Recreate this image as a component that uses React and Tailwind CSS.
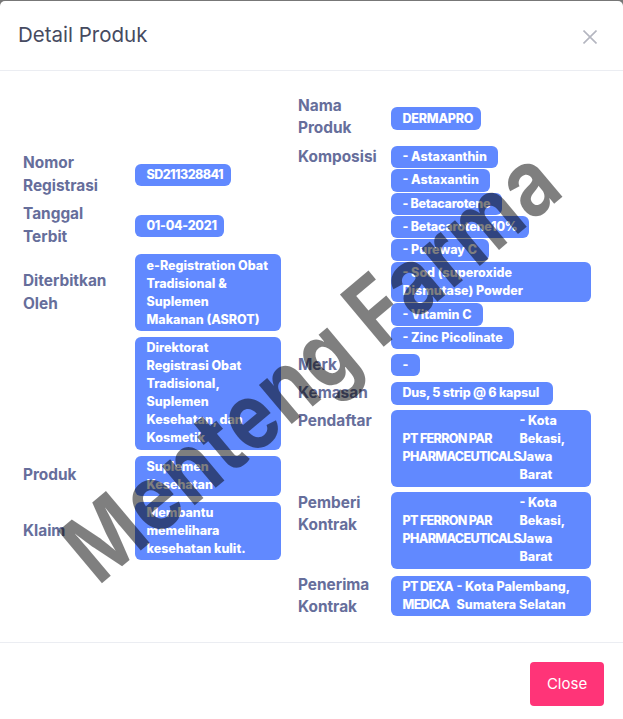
const font = { fontFamily: '"Inter", "Liberation Sans", sans-serif' };

const Badge = ({ children, className = "", track = "tracking-[0px]" }) => (
  <div className={`rounded-[6px] bg-[#6189ff] px-[11.5px] text-[12.5px] font-extrabold leading-[18px] whitespace-nowrap text-white ${track} ${className}`}>
    {children}
  </div>
);

const Small = ({ children, w = "", track }) => <Badge track={track} className={`py-[2.15px] ${w}`}>{children}</Badge>;

const Label = ({ children, className = "" }) => (
  <div className={`text-[15.4px] font-bold text-[#666e9b] ${className}`}>{children}</div>
);

const Company = ({ name, place, nameW }) => (
  <div className="flex items-center">
    <div className={`${nameW} tracking-[-0.65px]`}>{name}</div>
    <div className="min-w-0 flex-1">{place}</div>
  </div>
);

export default function App() {
  return (
    <div style={font} className="h-[719px] w-[623px] overflow-hidden bg-[#777777] pt-[1px]">
      <div className="relative flex h-[718px] flex-col overflow-hidden rounded-t-[5px] bg-white">
        <div className="flex h-[70px] shrink-0 items-center justify-between border-b border-[#ebedf2] pb-[1px] pl-[18px] pr-[26px]">
          <h5 className="text-[20.5px] font-normal text-[#464a60]">Detail Produk</h5>
          <svg width="14" height="14" viewBox="0 0 14 14" className="mt-[3px] text-[#b4b6c0]" stroke="currentColor" strokeWidth="1.6" fill="none">
            <path d="M0.5 0.5L13.5 13.5M13.5 0.5L0.5 13.5" />
          </svg>
        </div>

        <div className="flex h-[571px] shrink-0 items-center pl-[23px]">
          {/* left table */}
          <div className="mb-[1px] grid w-[258px] grid-cols-[112px_146px] items-center gap-y-[5.9px]">
            <Label className="leading-[22.5px]">Nomor<br />Registrasi</Label>
            <Small w="w-[96px]" track="tracking-[-0.55px]">SD211328841</Small>
            <Label className="leading-[22.5px]">Tanggal<br />Terbit</Label>
            <Small w="w-[89px]" track="tracking-[-0.3px]">01-04-2021</Small>
            <Label className="leading-[22.5px]">Diterbitkan<br />Oleh</Label>
            <Badge className="py-[2.5px]">e-Registration Obat<br />Tradisional &amp;<br />Suplemen<br />Makanan (ASROT)</Badge>
            <div />
            <Badge className="py-[2.5px]">Direktorat<br />Registrasi Obat<br />Tradisional,<br />Suplemen<br />Kesehatan, dan<br />Kosmetik</Badge>
            <Label className="-mt-[2px]">Produk</Label>
            <Badge className="py-[2px]">Suplemen<br />Kesehatan</Badge>
            <Label>Klaim</Label>
            <Badge className="py-[2px]">Membantu<br />memelihara<br />kesehatan kulit.</Badge>
          </div>

          {/* right table */}
          <div className="ml-[17px] grid w-[293px] grid-cols-[93px_200px] items-start">
            <Label className="leading-[22px]">Nama<br />Produk</Label>
            <Small w="mt-[12px] w-[90px]" track="tracking-[-0.2px]">DERMAPRO</Small>
            <Label className="mt-[6.5px] leading-[22px]">Komposisi</Label>
            <div className="mt-[6.5px] flex flex-col items-start gap-[1px]">
              <Small>- Astaxanthin</Small>
              <Small>- Astaxantin</Small>
              <Small track="tracking-[-0.3px]">- Betacarotene</Small>
              <Small track="tracking-[-0.2px]">- Betacarotene10%</Small>
              <Small>- Pureway C</Small>
              <Badge className="w-full py-[2px]">- Sod (superoxide<br />Dismutase) Powder</Badge>
              <Small>- Vitamin C</Small>
              <Small>- Zinc Picolinate</Small>
            </div>
            <Label className="mt-[5px] leading-[22px]">Merk</Label>
            <Small w="mt-[5px] w-[29px]">-</Small>
            <Label className="mt-[6px] leading-[22px]">Kemasan</Label>
            <Small w="mt-[6px] w-[162px]" track="tracking-[-0.2px]">Dus, 5 strip @ 6 kapsul</Small>
            <Label className="mt-[5px] leading-[22px]">Pendaftar</Label>
            <Badge className="mt-[5px] py-[2.5px]">
              <Company nameW="w-[117px]" name={<>PT FERRON PAR<br />PHARMACEUTICALS</>} place={<>- Kota<br />Bekasi,<br />Jawa<br />Barat</>} />
            </Badge>
            <Label className="mt-[5px] leading-[22px]">Pemberi<br />Kontrak</Label>
            <Badge className="mt-[5px] py-[2.5px]">
              <Company nameW="w-[117px]" name={<>PT FERRON PAR<br />PHARMACEUTICALS</>} place={<>- Kota<br />Bekasi,<br />Jawa<br />Barat</>} />
            </Badge>
            <Label className="mt-[5px] leading-[22px]">Penerima<br />Kontrak</Label>
            <Badge className="mt-[7.5px] py-[2px]">
              <Company nameW="w-[54px]" name={<>PT DEXA<br />MEDICA</>} place={<>- Kota Palembang,<br />Sumatera Selatan</>} />
            </Badge>
          </div>
        </div>

        <div className="flex flex-1 items-start justify-end border-t border-[#ebedf2] pr-[19px] pt-[19px]">
          <button className="h-[44px] w-[74px] rounded-[4px] bg-[#ff3478] text-[15px] text-white">Close</button>
        </div>

        {/* watermark */}
        <div className="pointer-events-none absolute left-[311px] top-[363px] -translate-x-1/2 -translate-y-1/2 -rotate-[40deg] scale-y-[1.2] whitespace-nowrap text-[78px] font-bold leading-none tracking-[1.2px] text-black/50">
          Menteng Farma
        </div>
      </div>
    </div>
  );
}
